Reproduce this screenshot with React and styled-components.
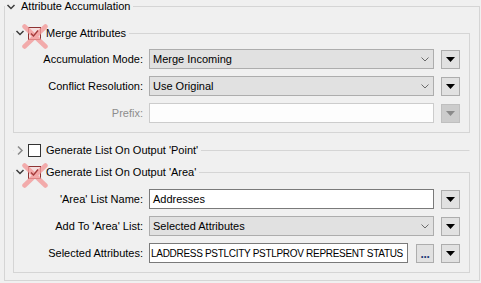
import React from 'react'
import styled, { createGlobalStyle } from 'styled-components'

const GlobalStyle = createGlobalStyle`
    html, body {
        margin: 0;
        padding: 0;
        background: #f0f0f0;
    }
    body {
        font-family: "Liberation Sans", Arial, sans-serif;
        font-size: 11px;
        color: #000;
    }
`

const Page = styled.div`
    width: 481px;
    height: 283px;
    box-sizing: border-box;
    padding: 0 1px 0 4px;
    overflow: hidden;
`

const Group = styled.fieldset`
    margin: ${props => props.$margin || "0"};
    padding: 0;
    min-inline-size: 0;
    border: 1px solid #d5d5d5;
    ${props => props.$collapsed && `
        border-color: #d5d5d5 transparent transparent transparent;
        border-bottom-width: 0;
    `}
`

const Legend = styled.legend`
    display: flex;
    align-items: center;
    height: 13px;
    line-height: 13px;
    padding: 0 3px 0 0;
    margin: 0;
    white-space: nowrap;
`

const Title = styled.span`
    margin-left: ${props => props.$gap || "0"};
`

const Body = styled.div`
    display: flex;
    flex-direction: column;
    gap: ${props => props.$gap || "7px"};
    padding: ${props => props.$padding};
`

const Row = styled.div`
    display: flex;
    align-items: center;
    height: 20px;
`

const Label = styled.div`
    width: 129px;
    flex: none;
    text-align: right;
    white-space: nowrap;
    color: ${props => props.disabled ? "#8d8d8d" : "#000"};
`

const Combo = styled.div`
    flex: 1;
    height: 20px;
    margin-left: 6px;
    box-sizing: border-box;
    display: flex;
    align-items: center;
    justify-content: space-between;
    padding: 0 4px 0 3px;
    background: #e1e1e1;
    border: 1px solid #adadad;
    white-space: nowrap;
`

const Input = styled.div`
    flex: 1;
    min-width: 0;
    height: 20px;
    margin-left: 6px;
    box-sizing: border-box;
    display: flex;
    align-items: center;
    padding: 0 3px;
    background: ${props => props.disabled ? "#fdfdfd" : "#fff"};
    border: 1px solid ${props => props.disabled ? "#cccccc" : "#7a7a7a"};
    white-space: nowrap;
    overflow: hidden;
`

const AttrText = styled.span`
    font-size: 10px;
    letter-spacing: -0.3px;
    margin-left: -2px;
`

const DropButton = styled.div`
    width: 19px;
    height: 19px;
    flex: none;
    margin-left: 7px;
    box-sizing: border-box;
    display: flex;
    align-items: center;
    justify-content: center;
    background: ${props => props.disabled ? "#cccccc" : "#e1e1e1"};
    border: 1px solid ${props => props.disabled ? "#bfbfbf" : "#adadad"};
`

const MoreButton = styled(DropButton)`
    width: 18px;
    margin-left: 8px;
    align-items: flex-end;
    padding-bottom: 4px;
    font-weight: bold;
    font-size: 12px;
    line-height: 8px;
    color: #1d3a78;
    letter-spacing: -0.3px;
`

const Box = styled.span`
    position: relative;
    width: 13px;
    height: 13px;
    flex: none;
    box-sizing: border-box;
    margin-left: ${props => props.$gap || "0"};
    background: ${props => props.checked ? "rgba(246, 214, 214, 0.7)" : "#fff"};
    border: 1px solid ${props => props.checked ? "#8e3434" : "#333"};
`

const Cross = styled.svg`
    position: absolute;
    left: -7px;
    top: -4px;
    pointer-events: none;
`

const Tick = styled.svg`
    position: absolute;
    left: 1px;
    top: 1px;
`

const Chevron = ({ open, color = "#3c3c3c", y = 5 }) => (
    <svg width="12" height="13" viewBox="0 0 12 13">
        {open
            ? <path d={`M2.5 ${y} L6 ${y + 3.5} L9.5 ${y}`} fill="none" stroke={color} strokeWidth="1.5" />
            : <path d="M4 2.5 L8 6.5 L4 10.5" fill="none" stroke={color} strokeWidth="1.5" />}
    </svg>
)

const Checkbox = ({ checked }) => (
    <Box checked={checked} $gap="2px">
        {checked && (
            <>
                <Cross width="26" height="25" viewBox="0 0 26 25">
                    <path d="M2.5 2.5 L23.5 22.5 M23.5 2.5 L2.5 22.5" stroke="#f29a9a" strokeOpacity="0.8" strokeWidth="4.5" strokeLinecap="round" />
                </Cross>
                <Tick width="9" height="9" viewBox="0 0 9 9">
                    <path d="M1 4.5 L3.5 7 L8 1.5" fill="none" stroke="#a33a3a" strokeWidth="1.3" />
                </Tick>
            </>
        )}
    </Box>
)

const ComboArrow = () => (
    <svg width="8" height="5" viewBox="0 0 8 5">
        <path d="M0.5 0.5 L4 4 L7.5 0.5" fill="none" stroke="#6a6a6a" strokeWidth="1" />
    </svg>
)

const Triangle = ({ disabled }) => (
    <svg width="9" height="5" viewBox="0 0 9 5">
        <path d="M0 0 H9 L4.5 5 Z" fill={disabled ? "#8a8a8a" : "#000"} />
    </svg>
)

const ComboRow = ({ label, value }) => (
    <Row>
        <Label>{label}</Label>
        <Combo>
            <span>{value}</span>
            <ComboArrow />
        </Combo>
        <DropButton><Triangle /></DropButton>
    </Row>
)

const App = () => {
    return (
        <>
            <GlobalStyle />
            <Page>
                <Group>
                    <Legend>
                        <Chevron open y={5} />
                        <Title $gap="4px">Attribute Accumulation</Title>
                    </Legend>
                    <Body $padding="14px 9px 7px 8px" $gap="0">
                        <Group>
                            <Legend>
                                <Chevron open y={4} />
                                <Checkbox checked />
                                <Title $gap="5px">Merge Attributes</Title>
                            </Legend>
                            <Body $padding="9px 9px 9px 0">
                                <ComboRow label="Accumulation Mode:" value="Merge Incoming" />
                                <ComboRow label="Conflict Resolution:" value="Use Original" />
                                <Row>
                                    <Label disabled>Prefix:</Label>
                                    <Input disabled />
                                    <DropButton disabled><Triangle disabled /></DropButton>
                                </Row>
                            </Body>
                        </Group>

                        <Group $collapsed $margin="11px 0 0 0">
                            <Legend>
                                <Chevron color="#8a8a8a" />
                                <Checkbox />
                                <Title $gap="5px">Generate List On Output 'Point'</Title>
                            </Legend>
                        </Group>

                        <Group $margin="9px 0 0 0">
                            <Legend>
                                <Chevron open y={4} />
                                <Checkbox checked />
                                <Title $gap="5px">Generate List On Output 'Area'</Title>
                            </Legend>
                            <Body $padding="10px 9px 9px 0">
                                <Row>
                                    <Label>'Area' List Name:</Label>
                                    <Input>Addresses</Input>
                                    <DropButton><Triangle /></DropButton>
                                </Row>
                                <ComboRow label="Add To 'Area' List:" value="Selected Attributes" />
                                <Row>
                                    <Label>Selected Attributes:</Label>
                                    <Input>
                                        <AttrText>LADDRESS PSTLCITY PSTLPROV REPRESENT STATUS</AttrText>
                                    </Input>
                                    <MoreButton>...</MoreButton>
                                    <DropButton><Triangle /></DropButton>
                                </Row>
                            </Body>
                        </Group>
                    </Body>
                </Group>
            </Page>
        </>
    )
}

export default App
